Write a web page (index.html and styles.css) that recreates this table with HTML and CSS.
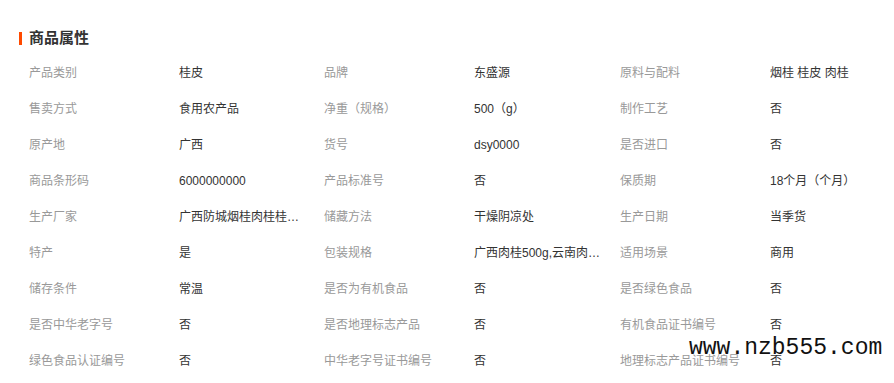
FILE: index.html
```html
<!DOCTYPE html>
<html lang="zh-CN">
<head>
<meta charset="utf-8">
<title>商品属性</title>
<link rel="stylesheet" href="styles.css">
</head>
<body>
<div class="page">
  <h2 class="title"><span class="bar"></span>商品属性</h2>
  <div class="attrs">
    <span class="k">产品类别</span><span class="v">桂皮</span>
    <span class="k">品牌</span><span class="v">东盛源</span>
    <span class="k">原料与配料</span><span class="v">烟桂 桂皮 肉桂</span>

    <span class="k">售卖方式</span><span class="v">食用农产品</span>
    <span class="k">净重（规格）</span><span class="v">500（g）</span>
    <span class="k">制作工艺</span><span class="v">否</span>

    <span class="k">原产地</span><span class="v">广西</span>
    <span class="k">货号</span><span class="v">dsy0000</span>
    <span class="k">是否进口</span><span class="v">否</span>

    <span class="k">商品条形码</span><span class="v">6000000000</span>
    <span class="k">产品标准号</span><span class="v">否</span>
    <span class="k">保质期</span><span class="v">18个月（个月）</span>

    <span class="k">生产厂家</span><span class="v">广西防城烟桂肉桂桂皮香料厂</span>
    <span class="k">储藏方法</span><span class="v">干燥阴凉处</span>
    <span class="k">生产日期</span><span class="v">当季货</span>

    <span class="k">特产</span><span class="v">是</span>
    <span class="k">包装规格</span><span class="v">广西肉桂500g,云南肉桂500g</span>
    <span class="k">适用场景</span><span class="v">商用</span>

    <span class="k">储存条件</span><span class="v">常温</span>
    <span class="k">是否为有机食品</span><span class="v">否</span>
    <span class="k">是否绿色食品</span><span class="v">否</span>

    <span class="k">是否中华老字号</span><span class="v">否</span>
    <span class="k">是否地理标志产品</span><span class="v">否</span>
    <span class="k">有机食品证书编号</span><span class="v">否</span>

    <span class="k">绿色食品认证编号</span><span class="v">否</span>
    <span class="k">中华老字号证书编号</span><span class="v">否</span>
    <span class="k">地理标志产品证书编号</span><span class="v">否</span>
  </div>
</div>
<div class="watermark">www.nzb555.com</div>
</body>
</html>
```

FILE: styles.css
```css
html, body {
  margin: 0;
  padding: 0;
  background: #fff;
}

body {
  font-family: "Liberation Sans", "Noto Sans CJK SC", sans-serif;
  font-size: 12px;
  color: #333;
  width: 894px;
  height: 383px;
  overflow: hidden;
  position: relative;
}

.page {
  padding: 28px 10px 0 19px;
}

.title {
  display: flex;
  align-items: center;
  gap: 7px;
  height: 20px;
  margin: 0;
  font-size: 15px;
  font-weight: bold;
  color: #333;
  line-height: 20px;
}

.bar {
  width: 3px;
  height: 13px;
  background: #ff4a00;
}

.attrs {
  display: grid;
  grid-template-columns: 150px 145px 150px 146px 150px 1fr;
  grid-auto-rows: 36px;
  margin: 7px 0 0 10px;
  line-height: 36px;
}

.k {
  color: #999;
  white-space: nowrap;
}

.v {
  color: #333;
  white-space: nowrap;
  overflow: hidden;
  text-overflow: ellipsis;
  padding-right: 19px;
}

.watermark {
  position: absolute;
  left: 689px;
  top: 337px;
  font-family: "Liberation Mono", monospace;
  font-size: 23px;
  line-height: 23px;
  color: #111;
}
```
